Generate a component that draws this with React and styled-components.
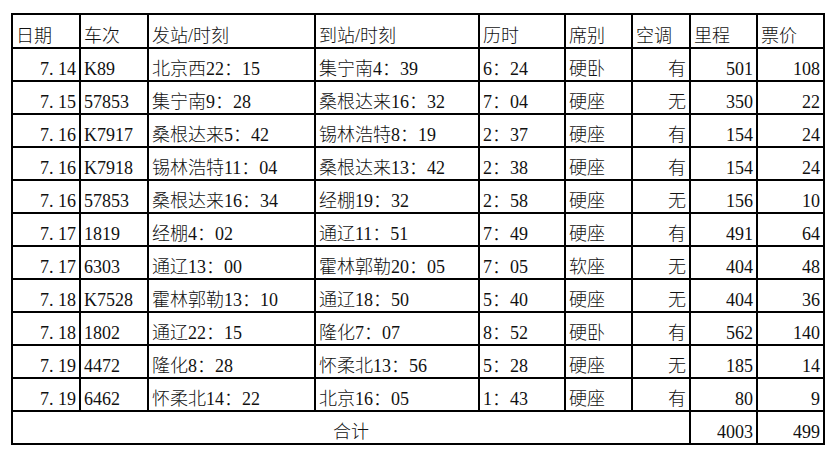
import React from 'react';
import styled, { createGlobalStyle } from 'styled-components';

const GlobalStyle = createGlobalStyle`
  html, body {
    margin: 0;
    padding: 0;
    background: #fff;
  }
  body {
    font-family: "Liberation Serif", "Noto Sans CJK SC", serif;
    color: #111;
  }
`;

const Sheet = styled.div`
  padding: 13px 0 0 11px;
`;

const Table = styled.table`
  border-collapse: collapse;
  table-layout: fixed;
  width: 814px;
  font-size: 18px;
`;

const Cell = styled.td`
  border: 2px solid #000;
  height: ${p => (p.$head ? 31 : 30)}px;
  padding: 0 3px 1px 3px;
  vertical-align: bottom;
  text-align: ${p => p.$align || 'left'};
  white-space: nowrap;
  overflow: hidden;
  line-height: 20px;
  font-weight: 300;
`;

const Dot = styled.span`
  display: inline-block;
  width: 0.5em;
  text-align: left;
`;

const widths = [68, 68, 167, 164, 86, 67, 58, 67, 67];
const headers = ['日期', '车次', '发站/时刻', '到站/时刻', '历时', '席别', '空调', '里程', '票价'];

const rows = [
  ['7.14', 'K89', '北京西22：15', '集宁南4：39', '6：24', '硬卧', '有', 501, 108],
  ['7.15', '57853', '集宁南9：28', '桑根达来16：32', '7：04', '硬座', '无', 350, 22],
  ['7.16', 'K7917', '桑根达来5：42', '锡林浩特8：19', '2：37', '硬座', '有', 154, 24],
  ['7.16', 'K7918', '锡林浩特11：04', '桑根达来13：42', '2：38', '硬座', '有', 154, 24],
  ['7.16', '57853', '桑根达来16：34', '经棚19：32', '2：58', '硬座', '无', 156, 10],
  ['7.17', '1819', '经棚4：02', '通辽11：51', '7：49', '硬座', '有', 491, 64],
  ['7.17', '6303', '通辽13：00', '霍林郭勒20：05', '7：05', '软座', '无', 404, 48],
  ['7.18', 'K7528', '霍林郭勒13：10', '通辽18：50', '5：40', '硬座', '无', 404, 36],
  ['7.18', '1802', '通辽22：15', '隆化7：07', '8：52', '硬卧', '有', 562, 140],
  ['7.19', '4472', '隆化8：28', '怀柔北13：56', '5：28', '硬座', '无', 185, 14],
  ['7.19', '6462', '怀柔北14：22', '北京16：05', '1：43', '硬座', '有', 80, 9],
];

const aligns = ['right', 'left', 'left', 'left', 'left', 'left', 'right', 'right', 'right'];

function DateText({ value }) {
  const [m, d] = value.split('.');
  return (
    <>
      {m}
      <Dot>.</Dot>
      {d}
    </>
  );
}

export default function App() {
  return (
    <Sheet>
      <GlobalStyle />
      <Table>
        <colgroup>
          {widths.map((w, i) => (
            <col key={i} style={{ width: w }} />
          ))}
        </colgroup>
        <tbody>
          <tr>
            {headers.map(h => (
              <Cell key={h} $head>{h}</Cell>
            ))}
          </tr>
          {rows.map((r, ri) => (
            <tr key={ri}>
              {r.map((v, ci) => (
                <Cell key={ci} $align={aligns[ci]}>
                  {ci === 0 ? <DateText value={v} /> : v}
                </Cell>
              ))}
            </tr>
          ))}
          <tr>
            <Cell colSpan={7} $align="center">合计</Cell>
            <Cell $align="right">4003</Cell>
            <Cell $align="right">499</Cell>
          </tr>
        </tbody>
      </Table>
    </Sheet>
  );
}
